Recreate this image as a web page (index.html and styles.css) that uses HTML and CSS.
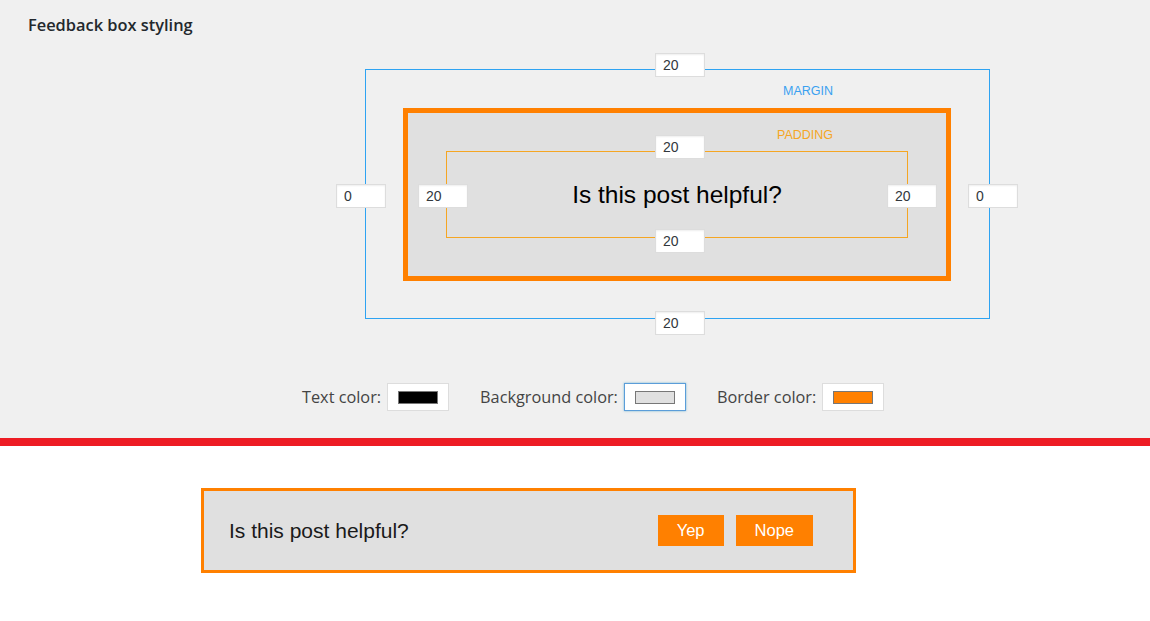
FILE: index.html
```html
<!DOCTYPE html>
<html>
<head>
<meta charset="utf-8">
<title>Feedback box styling</title>
<link rel="stylesheet" href="styles.css">
</head>
<body>
<section class="settings">
  <h2 class="title">Feedback box styling</h2>
  <div class="diagram">
    <div class="margin-box">
      <div class="border-box">
        <div class="padding-box">
          <span class="sample">Is this post helpful?</span>
        </div>
      </div>
    </div>
    <span class="label label-margin">MARGIN</span>
    <span class="label label-padding">PADDING</span>
    <input class="num num-mt" type="text" value="20">
    <input class="num num-pt" type="text" value="20">
    <input class="num num-ml" type="text" value="0">
    <input class="num num-pl" type="text" value="20">
    <input class="num num-pr" type="text" value="20">
    <input class="num num-mr" type="text" value="0">
    <input class="num num-pb" type="text" value="20">
    <input class="num num-mb" type="text" value="20">
  </div>
  <div class="colors">
    <div class="color-field">
      <span class="color-label">Text color:</span>
      <button class="swatch"><span class="chip chip-text"></span></button>
    </div>
    <div class="color-field">
      <span class="color-label">Background color:</span>
      <button class="swatch swatch-focus"><span class="chip chip-bg"></span></button>
    </div>
    <div class="color-field">
      <span class="color-label">Border color:</span>
      <button class="swatch"><span class="chip chip-border"></span></button>
    </div>
  </div>
</section>
<div class="divider"></div>
<section class="preview">
  <div class="feedback">
    <span class="feedback-text">Is this post helpful?</span>
    <div class="actions">
      <button class="btn">Yep</button>
      <button class="btn">Nope</button>
    </div>
  </div>
</section>
</body>
</html>
```
FILE: styles.css
```css
html, body {
  margin: 0;
  padding: 0;
  background: #ffffff;
}

body {
  width: 1150px;
  height: 621px;
  overflow: hidden;
  font-family: "Liberation Sans", Arial, sans-serif;
}

.settings {
  background: #f0f0f0;
  height: 438px;
  box-sizing: border-box;
  padding-top: 15px;
}

.title {
  margin: 0 0 0 28px;
  font-family: "Open Sans", "Noto Sans", sans-serif;
  font-size: 16.4px;
  line-height: 20px;
  font-weight: 600;
  color: #23282d;
}

.diagram {
  position: relative;
  margin-top: 34px;
  padding-left: 365px;
}

.margin-box {
  width: 625px;
  height: 250px;
  box-sizing: border-box;
  border: 1px solid #2ea3f2;
  padding: 38px 38px 37px 37px;
}

.border-box {
  height: 173px;
  box-sizing: border-box;
  border: 5px solid #ff8000;
  background: #e0e0e0;
  padding: 38px;
}

.padding-box {
  height: 87px;
  box-sizing: border-box;
  border: 1px solid #f5a623;
  display: flex;
  align-items: center;
  justify-content: center;
}

.sample {
  font-size: 24.5px;
  color: #000000;
  line-height: 28px;
}

.label {
  position: absolute;
  right: 317px;
  font-size: 12.5px;
  line-height: 14px;
}

.label-margin {
  top: 15px;
  color: #3aa1f0;
}

.label-padding {
  top: 59px;
  color: #f5a623;
}

.num {
  position: absolute;
  width: 50px;
  height: 24px;
  box-sizing: border-box;
  margin: 0;
  padding: 0 0 0 7px;
  border: 1px solid #dddddd;
  background: #ffffff;
  box-shadow: inset 0 1px 2px rgba(0, 0, 0, 0.07);
  font-family: "Liberation Sans", Arial, sans-serif;
  font-size: 14px;
  color: #32373c;
  outline: none;
}

.num-mt { left: 655px; top: -16px; }
.num-pt { left: 655px; top: 66px; }
.num-ml { left: 336px; top: 115px; }
.num-pl { left: 418px; top: 115px; }
.num-pr { left: 887px; top: 115px; }
.num-mr { left: 968px; top: 115px; }
.num-pb { left: 655px; top: 160px; }
.num-mb { left: 655px; top: 242px; }

.colors {
  display: flex;
  align-items: center;
  gap: 31px;
  margin-top: 64px;
  padding-left: 302px;
}

.color-field {
  display: flex;
  align-items: center;
  gap: 6px;
}

.color-label {
  font-family: "Open Sans", "Noto Sans", sans-serif;
  font-size: 16.3px;
  color: #444444;
}

.swatch {
  width: 62px;
  height: 28px;
  box-sizing: border-box;
  margin: 0;
  padding: 0;
  border: 1px solid #dddddd;
  background: #ffffff;
  display: flex;
  align-items: center;
  justify-content: center;
}

.swatch-focus {
  border-color: #5b9dd9;
  box-shadow: 0 0 2px rgba(30, 140, 190, 0.6);
}

.chip {
  width: 40px;
  height: 13px;
  box-sizing: border-box;
  border: 1px solid #777777;
}

.chip-text { background: #000000; }
.chip-bg { background: #e0e0e0; }
.chip-border { background: #ff8000; }

.divider {
  height: 8px;
  background: #ed1c24;
}

.preview {
  padding: 42px 0 0 201px;
}

.feedback {
  width: 655px;
  height: 85px;
  box-sizing: border-box;
  border: 3px solid #ff8000;
  background: #e0e0e0;
  display: flex;
  align-items: center;
  justify-content: space-between;
  padding: 0 40px 0 25px;
}

.feedback-text {
  font-size: 21px;
  color: #1a1a1a;
}

.actions {
  display: flex;
  gap: 12px;
}

.btn {
  height: 31px;
  margin: 0;
  padding: 0 19px;
  border: none;
  background: #ff8000;
  color: #ffffff;
  font-family: "Liberation Sans", Arial, sans-serif;
  font-size: 16.5px;
}
```
